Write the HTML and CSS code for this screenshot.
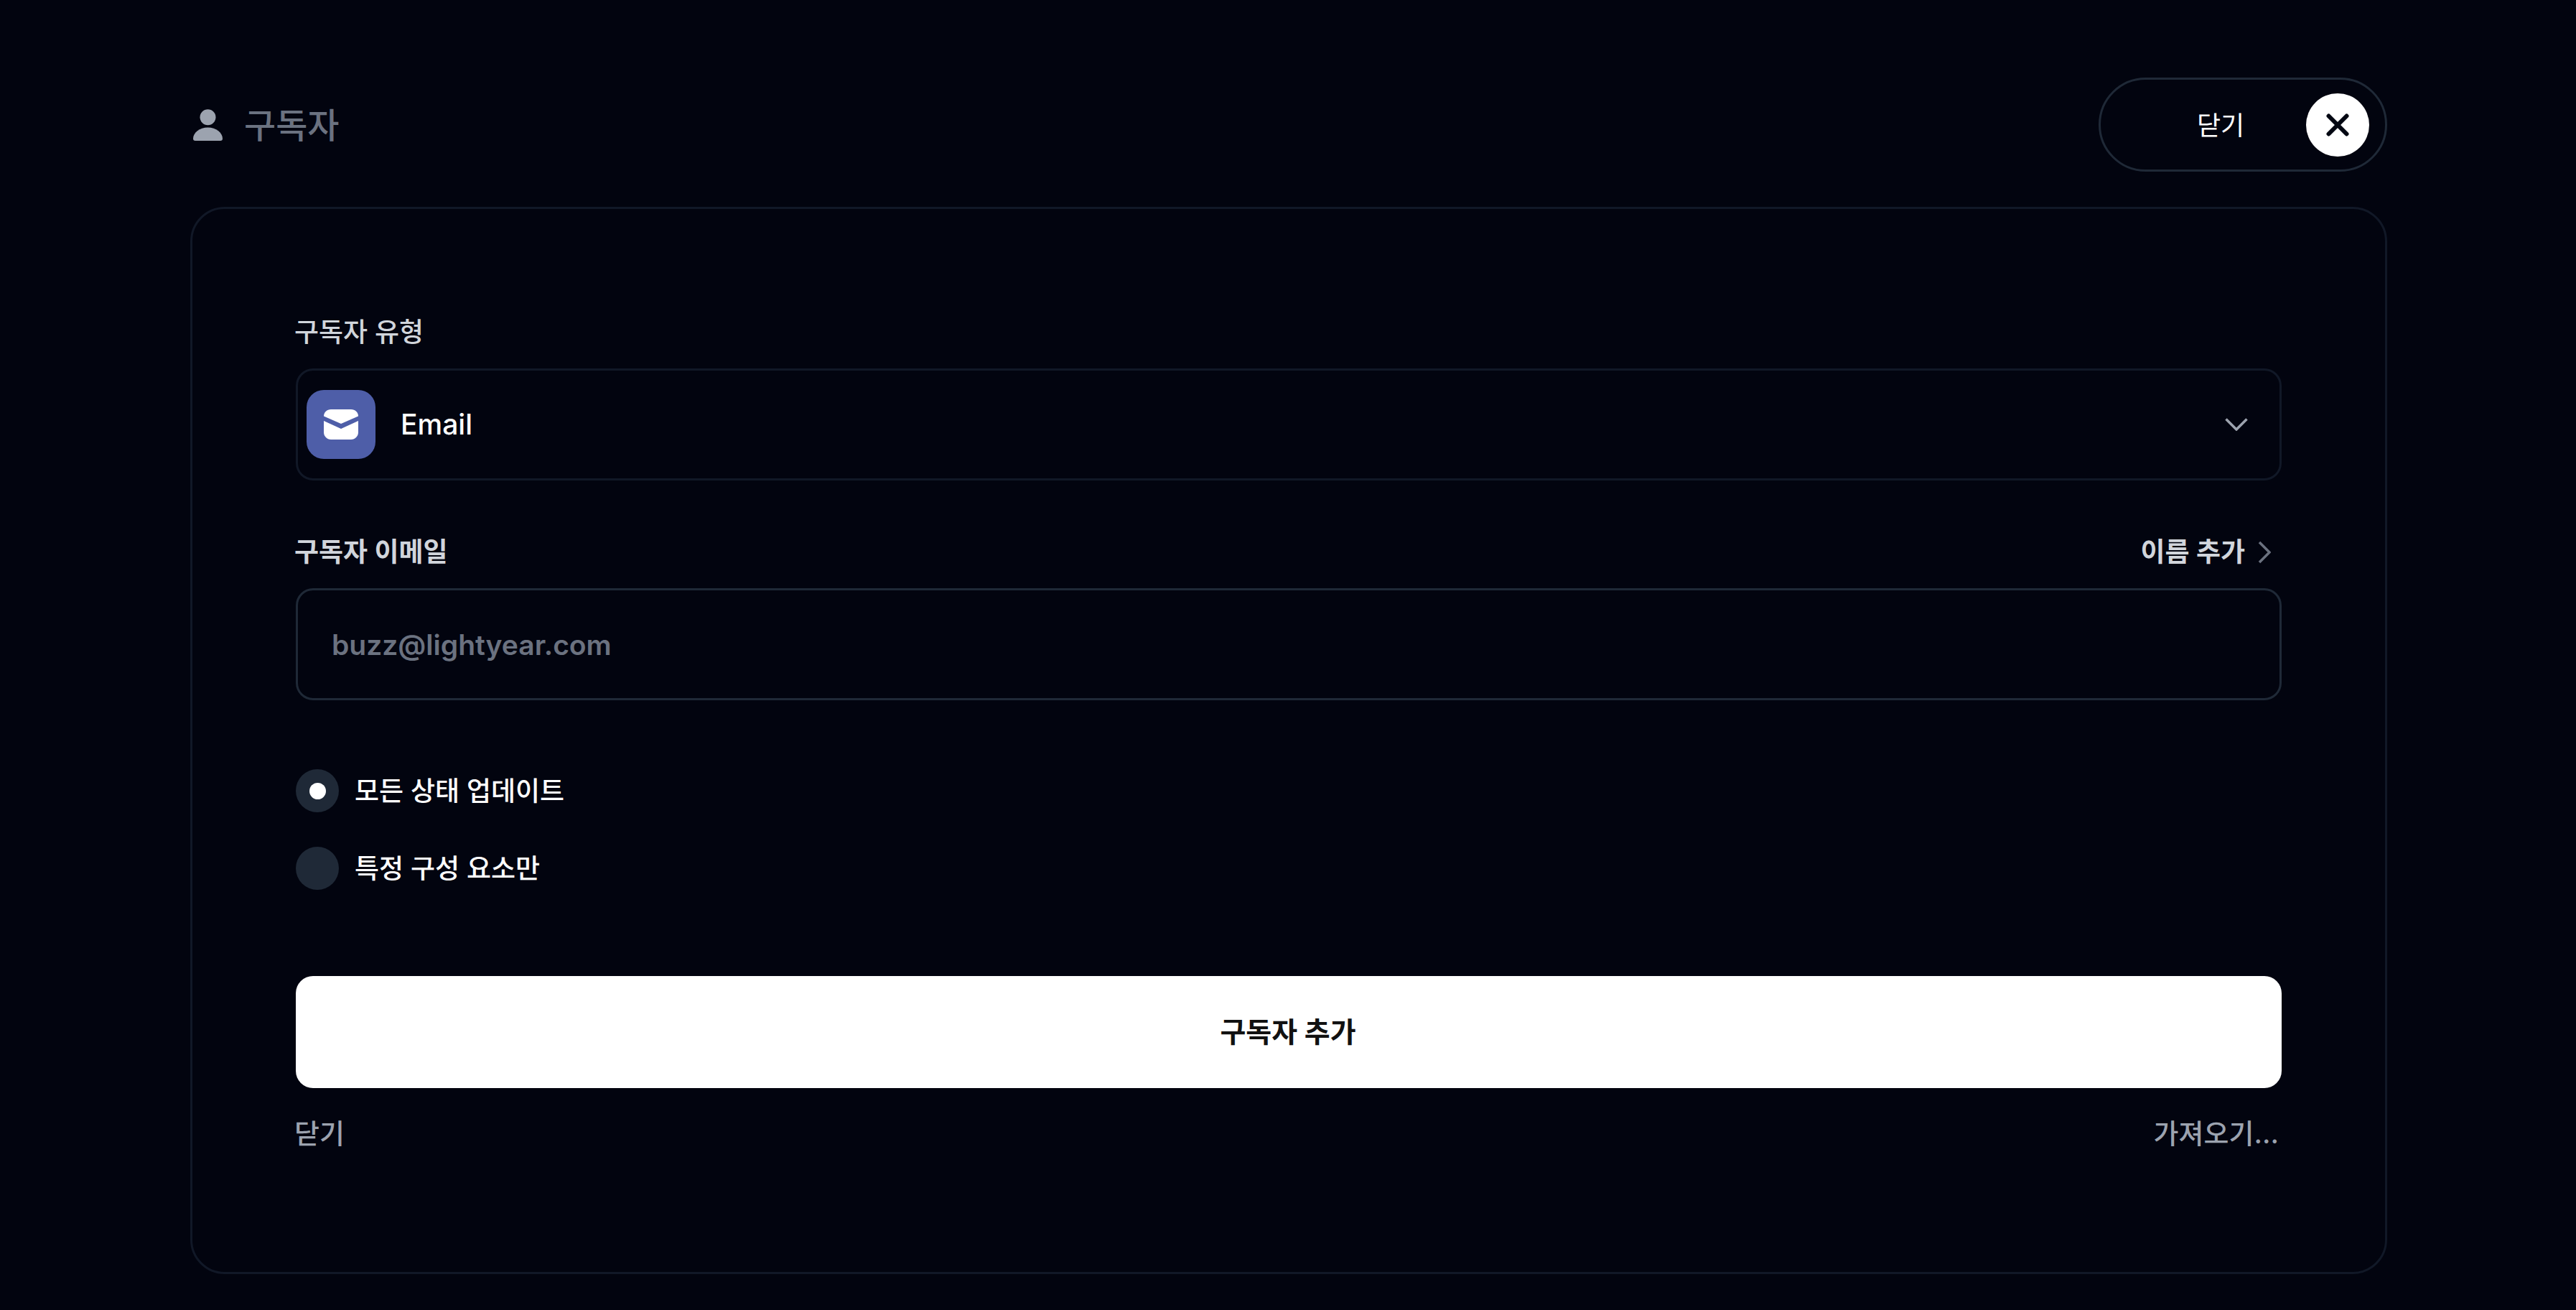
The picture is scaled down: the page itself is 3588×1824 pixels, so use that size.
FILE: index.html
```html
<!doctype html>
<html lang="ko">
  <head>
    <title>구독자</title>
    <link rel="stylesheet" href="styles.css">
  </head>
  <body>
    <div class="container">
      <div class="page-header">
        <div class="page-title">
          <svg class="person-icon" viewBox="0 0 41 44">
            <circle cx="20.5" cy="11.3" r="11" />
            <path d="M3 44 H38 C40 44 41 43 41 41 C41 33 32 25.5 20.5 25.5 C9 25.5 0 33 0 41 C0 43 1 44 3 44 Z" />
          </svg>
          <span class="title-text">구독자</span>
        </div>
        <button class="close-pill">
          <span class="close-text">닫기</span>
          <span class="close-circle">
            <svg viewBox="0 0 32 32">
              <path d="M3.5 3.5 L28.5 28.5 M28.5 3.5 L3.5 28.5" />
            </svg>
          </span>
        </button>
      </div>

      <div class="card">
        <div class="field-label type-label">구독자 유형</div>
        <div class="type-select">
          <div class="type-icon">
            <svg viewBox="0 0 48 42">
              <path d="M0 9.5 C0 4 4.5 0 10 0 H38 C43.5 0 48 4 48 9.5 L24 20 Z" />
              <path d="M0 16 L24 27 L48 16 V32 C48 37.5 43.5 42 38 42 H10 C4.5 42 0 37.5 0 32 Z" />
            </svg>
          </div>
          <span class="type-name">Email</span>
          <svg class="select-chevron" viewBox="0 0 32 18">
            <path d="M1.5 1.5 L16 16 L30.5 1.5" />
          </svg>
        </div>

        <div class="field-row">
          <div class="field-label">구독자 이메일</div>
          <div class="field-label add-name">
            <span>이름 추가</span>
            <svg viewBox="0 0 18 32">
              <path d="M2 2 L16 16 L2 30" />
            </svg>
          </div>
        </div>
        <input class="email-input" type="text" placeholder="buzz@lightyear.com">

        <div class="radio-group">
          <label class="radio-option">
            <span class="radio checked"></span>
            <span class="radio-text">모든 상태 업데이트</span>
          </label>
          <label class="radio-option">
            <span class="radio"></span>
            <span class="radio-text">특정 구성 요소만</span>
          </label>
        </div>

        <button class="primary">구독자 추가</button>

        <div class="card-footer">
          <span>닫기</span>
          <span>가져오기...</span>
        </div>
      </div>
    </div>
  </body>
</html>
```

FILE: styles.css
```css
:root {
  --background: #02040f;
  --text: #ffffff;
  --label: #d1d5db;
  --muted: #9ca3af;
  --dim: #6b7280;
  --border: #111827;
  --border-strong: #1f2937;
}

* {
  box-sizing: border-box;
}

body {
  margin: 0;
  background: var(--background);
  color: var(--text);
  font-family: Inter, 'Noto Sans CJK KR', sans-serif;
  font-size: 37px;
  line-height: 48px;
}

.container {
  width: 3060px;
  margin-left: 265px;
  padding-top: 108px;
}

.page-header {
  display: flex;
  align-items: center;
  justify-content: space-between;
  margin-bottom: 49px;
}

.page-title {
  display: flex;
  align-items: center;
  gap: 30px;
  padding-left: 4px;
  color: var(--dim);
  font-size: 48px;
  font-weight: 500;
}

.title-text {
  padding-top: 3px;
}

.person-icon {
  width: 41px;
  height: 44px;
  fill: var(--muted);
}

.close-pill {
  display: flex;
  align-items: center;
  width: 402px;
  height: 131px;
  padding: 0 22px 0 134px;
  justify-content: space-between;
  border: 3px solid var(--border-strong);
  border-radius: 66px;
  background: transparent;
  color: var(--text);
  font: inherit;
  font-size: 36px;
}

.close-text {
  padding-top: 3px;
}

.close-circle {
  display: flex;
  align-items: center;
  justify-content: center;
  width: 88px;
  height: 88px;
  border-radius: 50%;
  background: #ffffff;
}

.close-circle svg {
  width: 32px;
  height: 32px;
  fill: none;
  stroke: #030712;
  stroke-width: 6;
  stroke-linecap: round;
}

.card {
  height: 1486px;
  padding: 148px 144px 0;
  border: 3px solid var(--border);
  border-radius: 48px;
}

.field-label {
  margin-left: -2px;
  color: var(--label);
  font-weight: 500;
}

.type-label {
  margin-bottom: 26px;
}

.type-select {
  display: flex;
  align-items: center;
  height: 156px;
  padding: 0 44px 0 12px;
  border: 3px solid var(--border);
  border-radius: 24px;
}

.type-icon {
  display: flex;
  align-items: center;
  justify-content: center;
  width: 96px;
  height: 96px;
  border-radius: 24px;
  background: #4e5ea8;
}

.type-icon svg {
  width: 48px;
  height: 42px;
  fill: #ffffff;
}

.type-name {
  margin-left: 35px;
  flex-grow: 1;
  font-size: 39px;
  font-weight: 500;
}

.select-chevron {
  width: 32px;
  height: 18px;
  fill: none;
  stroke: var(--muted);
  stroke-width: 3.5;
}

.field-row {
  display: flex;
  justify-content: space-between;
  margin-top: 76px;
  margin-bottom: 26px;
}

.field-row .field-label {
  font-weight: 600;
}

.add-name {
  display: flex;
  align-items: center;
  gap: 18px;
  padding-right: 15px;
}

.add-name svg {
  width: 18px;
  height: 32px;
  fill: none;
  stroke: var(--dim);
  stroke-width: 3.5;
}

.email-input {
  display: block;
  width: 100%;
  height: 156px;
  padding: 0 47px;
  border: 3px solid var(--border-strong);
  border-radius: 24px;
  background: transparent;
  color: var(--text);
  font: inherit;
  font-size: 39px;
  font-weight: 600;
  outline: none;
}

.email-input::placeholder {
  color: var(--dim);
  opacity: 1;
}

.radio-group {
  display: flex;
  flex-direction: column;
  gap: 48px;
  margin-top: 96px;
}

.radio-option {
  display: flex;
  align-items: center;
  gap: 22px;
  font-weight: 500;
}

.radio-text {
  padding-top: 2px;
}

.radio {
  display: flex;
  align-items: center;
  justify-content: center;
  width: 60px;
  height: 60px;
  border-radius: 50%;
  background: var(--border-strong);
}

.radio.checked::after {
  content: '';
  width: 23px;
  height: 23px;
  border-radius: 50%;
  background: #ffffff;
}

button.primary {
  display: block;
  width: 100%;
  height: 156px;
  margin-top: 120px;
  padding-right: 8px;
  border: none;
  border-radius: 24px;
  background: #ffffff;
  color: #111111;
  font: inherit;
  font-size: 39px;
  font-weight: 600;
}

.card-footer {
  display: flex;
  justify-content: space-between;
  margin-top: 39px;
  margin-left: -2px;
  padding-right: 4px;
  color: var(--muted);
  font-size: 38px;
  font-weight: 500;
}
```
